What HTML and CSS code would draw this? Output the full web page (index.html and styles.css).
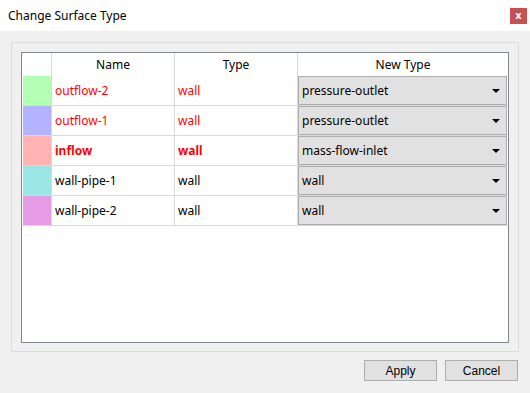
FILE: index.html
```html
<!DOCTYPE html>
<html lang="en">
<head>
    <meta charset="UTF-8">
    <title>Change Surface Type</title>
    <link rel="stylesheet" href="styles.css">
</head>
<body>
    <!-- Barre de titre -->
    <div class="titlebar">
        <span class="title">Change Surface Type</span>
        <span class="close">x</span>
    </div>

    <div class="content">
        <div class="group">
            <div class="table">
                <div class="row header">
                    <div class="cell swatch-cell"></div>
                    <div class="cell">Name</div>
                    <div class="cell">Type</div>
                    <div class="cell last">New Type</div>
                </div>

                <div class="row error">
                    <div class="cell swatch-cell"><span class="swatch green"></span></div>
                    <div class="cell">outflow-2</div>
                    <div class="cell">wall</div>
                    <div class="cell last"><div class="combo">pressure-outlet<span class="arrow"></span></div></div>
                </div>

                <div class="row error">
                    <div class="cell swatch-cell"><span class="swatch blue"></span></div>
                    <div class="cell">outflow-1</div>
                    <div class="cell">wall</div>
                    <div class="cell last"><div class="combo">pressure-outlet<span class="arrow"></span></div></div>
                </div>

                <div class="row error bold">
                    <div class="cell swatch-cell"><span class="swatch pink"></span></div>
                    <div class="cell">inflow</div>
                    <div class="cell">wall</div>
                    <div class="cell last"><div class="combo">mass-flow-inlet<span class="arrow"></span></div></div>
                </div>

                <div class="row">
                    <div class="cell swatch-cell"><span class="swatch cyan"></span></div>
                    <div class="cell">wall-pipe-1</div>
                    <div class="cell">wall</div>
                    <div class="cell last"><div class="combo">wall<span class="arrow"></span></div></div>
                </div>

                <div class="row">
                    <div class="cell swatch-cell"><span class="swatch magenta"></span></div>
                    <div class="cell">wall-pipe-2</div>
                    <div class="cell">wall</div>
                    <div class="cell last"><div class="combo">wall<span class="arrow"></span></div></div>
                </div>
            </div>
        </div>

        <!-- Boutons -->
        <div class="buttons">
            <button class="btn">Apply</button>
            <button class="btn">Cancel</button>
        </div>
    </div>
</body>
</html>
```

FILE: styles.css
```css
/* Styles généraux */
body {
    margin: 0;
    width: 530px;
    height: 393px;
    background: #f0f0f0;
    font-family: "Noto Sans", "Open Sans", sans-serif;
    font-size: 12px;
    color: #000;
    overflow: hidden;
}

/* Barre de titre */
.titlebar {
    height: 31px;
    background: #fff;
    display: flex;
    align-items: center;
    justify-content: space-between;
    padding: 0 3px 0 8px;
    box-sizing: border-box;
}

.title {
    color: #000;
    font-size: 12px;
}

.close {
    width: 17px;
    height: 16px;
    background: #c75050;
    color: #fff;
    font-family: "DejaVu Sans", sans-serif;
    font-weight: bold;
    font-size: 10px;
    line-height: 15px;
    text-align: center;
}

/* Contenu */
.content {
    padding: 11px 11px 0 11px;
}

.group {
    height: 310px;
    box-sizing: border-box;
    border: 1px solid #dcdcdc;
    padding: 9px 9px 8px 9px;
}

.table {
    height: 291px;
    box-sizing: border-box;
    border: 1px solid #828790;
    background: #fff;
}

.row {
    display: grid;
    grid-template-columns: 30px 123px 123px 1fr;
    height: 30px;
}

.row.header {
    height: 23px;
}

.cell {
    border-right: 1px solid #d9d9d9;
    border-bottom: 1px solid #d9d9d9;
    display: flex;
    align-items: center;
    padding-left: 3px;
    overflow: hidden;
    white-space: nowrap;
}

.cell.last {
    border-right: none;
    padding-left: 0;
}

.header .cell {
    border-bottom: none;
    justify-content: center;
    padding-left: 0;
}

.swatch-cell {
    padding-left: 1px;
    align-items: stretch;
}

.swatch {
    flex: 1;
}

.green { background: #b3ffb3; }
.blue { background: #b3b3ff; }
.pink { background: #ffb3b3; }
.cyan { background: #9ce5e5; }
.magenta { background: #e59ce5; }

.error .cell {
    color: #ff0000;
}

.bold .cell {
    font-weight: bold;
}

.error .cell.last,
.bold .cell.last {
    color: #000;
    font-weight: normal;
}

/* Liste déroulante */
.combo {
    flex: 1;
    align-self: stretch;
    margin-right: 1px;
    background: #e1e1e1;
    border: 1px solid #adadad;
    display: flex;
    align-items: center;
    justify-content: space-between;
    padding: 0 6px 0 3px;
}

.arrow {
    width: 0;
    height: 0;
    border-left: 4px solid transparent;
    border-right: 4px solid transparent;
    border-top: 4px solid #000;
}

/* Boutons */
.buttons {
    display: flex;
    justify-content: flex-end;
    gap: 8px;
    margin-top: 8px;
    padding-right: 1px;
}

.btn {
    width: 73px;
    height: 21px;
    background: #e1e1e1;
    border: 1px solid #adadad;
    font-family: "Liberation Sans", sans-serif;
    font-size: 12px;
    color: #000;
    padding: 0;
}
```
